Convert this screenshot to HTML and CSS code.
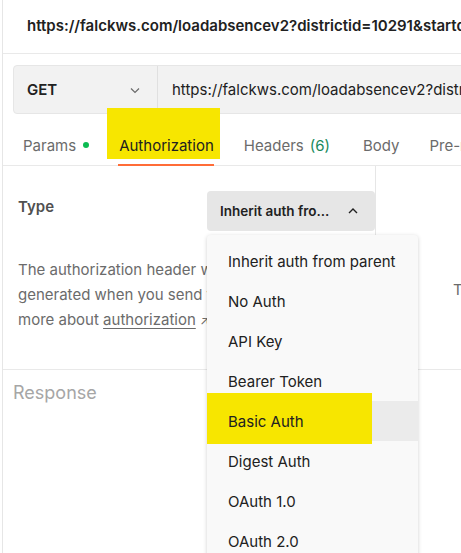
FILE: index.html
```html
<!DOCTYPE html>
<html>
<head>
<meta charset="utf-8">
<link rel="stylesheet" href="styles.css">
</head>
<body>
<div class="app">
  <div class="topbar">
    <span class="req-title">https://falckws.com/loadabsencev2?districtid=10291&amp;startdate=2021-01-01</span>
  </div>
  <div class="urlrow">
    <div class="urlbox">
      <div class="method">
        <span class="method-name">GET</span>
        <svg class="chev" width="12" height="12" viewBox="0 0 12 12"><path d="M2 4.5 L6 8.5 L10 4.5" fill="none" stroke="#6b6b6b" stroke-width="1.2"/></svg>
      </div>
      <div class="url">https://falckws.com/loadabsencev2?districtid=10291&amp;startdate=2021</div>
    </div>
  </div>
  <div class="tabs">
    <div class="tab">Params<span class="dot"></span></div>
    <div class="tab active"><span class="hl hl-tab"></span><span class="label">Authorization</span></div>
    <div class="tab">Headers <span class="count">(6)</span></div>
    <div class="tab">Body</div>
    <div class="tab">Pre-request Script</div>
  </div>
  <div class="content">
    <div class="left">
      <div class="type-row">
        <span class="type-label">Type</span>
        <div class="select-wrap">
          <div class="select">
            <span>Inherit auth fro...</span>
            <svg class="chev-up" width="12" height="12" viewBox="0 0 12 12"><path d="M2 8 L6 4 L10 8" fill="none" stroke="#212121" stroke-width="1.4"/></svg>
          </div>
          <div class="menu">
            <div class="item">Inherit auth from parent</div>
            <div class="item">No Auth</div>
            <div class="item">API Key</div>
            <div class="item">Bearer Token</div>
            <div class="item hover"><span class="hl hl-item"></span><span class="label">Basic Auth</span></div>
            <div class="item">Digest Auth</div>
            <div class="item">OAuth 1.0</div>
            <div class="item">OAuth 2.0</div>
            <div class="item">Hawk Authentication</div>
          </div>
        </div>
      </div>
      <p class="desc">The authorization header will be automatically generated when you send the request. Learn more about <span class="link">authorization</span> <span class="arrow">↗</span></p>
    </div>
    <div class="right">
      <p class="right-text">This request is using No Auth</p>
    </div>
  </div>
  <div class="response">Response</div>
</div>
</body>
</html>
```
FILE: styles.css
```css
* { box-sizing: border-box; }
html, body {
  margin: 0;
  padding: 0;
  width: 461px;
  height: 553px;
  overflow: hidden;
  background: #ffffff;
  font-family: Inter, "Noto Sans", sans-serif;
  color: #212121;
}
.app {
  margin-left: 2px;
  border-left: 1px solid #e6e6e6;
  height: 553px;
  width: 600px;
  overflow: hidden;
}
.topbar {
  height: 54px;
  border-bottom: 1px solid #e9e9e9;
  padding: 15px 0 0 24px;
  white-space: nowrap;
}
.req-title {
  font-size: 15px;
  font-weight: 600;
  color: #212121;
}
.urlrow {
  padding: 11px 0 0 10px;
}
.urlbox {
  display: flex;
  height: 49px;
  background: #f2f2f2;
  border: 1px solid #e6e6e6;
  border-radius: 4px;
  width: 700px;
}
.method {
  width: 144px;
  display: flex;
  align-items: center;
  justify-content: space-between;
  padding: 0 16px 0 13px;
  border-right: 1px solid #e0e0e0;
}
.method-name {
  font-size: 15px;
  font-weight: 600;
}
.url {
  display: flex;
  align-items: center;
  padding-left: 14px;
  font-size: 15px;
  white-space: nowrap;
  color: #212121;
}
.tabs {
  display: flex;
  height: 52px;
  align-items: center;
  padding: 0 0 0 20px;
  gap: 30px;
  border-bottom: 1px solid #e9e9e9;
  white-space: nowrap;
}
.tab {
  position: relative;
  font-size: 15px;
  color: #6b6b6b;
  height: 52px;
  display: flex;
  align-items: center;
  padding-top: 11px;
}
.tab.active {
  color: #212121;
}
.tab.active::after {
  content: "";
  position: absolute;
  left: -1px;
  right: 0;
  bottom: 0;
  height: 2px;
  background: #ff6c37;
}
.dot {
  display: inline-block;
  width: 6px;
  height: 6px;
  border-radius: 50%;
  background: #0cbb52;
  margin-left: 7px;
}
.count {
  color: #1a8a5c;
  margin-left: 6px;
  padding-right: 3px;
}
.label {
  position: relative;
  z-index: 1;
}
.hl {
  position: absolute;
  z-index: 0;
  background: #f7e600;
}
.hl-tab {
  left: -12px;
  right: -6px;
  top: -6px;
  bottom: 7px;
}
.content {
  display: flex;
  height: 204px;
  border-bottom: 1px solid #e9e9e9;
}
.left {
  width: 387px;
  border-right: 1px solid #e6e6e6;
  padding: 25px 0 0 15px;
}
.type-row {
  display: flex;
  align-items: flex-start;
}
.type-label {
  font-size: 15px;
  font-weight: 600;
  color: #505050;
  width: 189px;
  padding-top: 6px;
}
.select-wrap {
  position: relative;
  z-index: 5;
}
.select {
  width: 168px;
  height: 40px;
  background: #e6e6e6;
  border-radius: 4px;
  display: flex;
  align-items: center;
  justify-content: space-between;
  padding: 0 16px 0 13px;
  font-size: 13.5px;
  font-weight: 600;
  color: #212121;
}
.menu {
  position: absolute;
  top: 44px;
  left: 0;
  width: 211px;
  background: #f9f9f9;
  border-radius: 4px;
  box-shadow: 0 1px 4px rgba(0,0,0,0.18);
  padding-top: 6px;
}
.item {
  position: relative;
  height: 40px;
  display: flex;
  align-items: center;
  padding-left: 21px;
  font-size: 15px;
  color: #212121;
  white-space: nowrap;
}
.item.hover {
  background: #ebebeb;
}
.hl-item {
  left: 0;
  width: 165px;
  top: -8px;
  bottom: -3px;
}
.desc {
  margin: 26px 0 0 0;
  font-size: 15px;
  line-height: 25px;
  color: #6b6b6b;
  width: 352px;
}
.link {
  text-decoration: underline;
  text-underline-offset: 3px;
}
.arrow {
  font-size: 12px;
}
.right {
  flex: 1;
  padding: 114px 0 0 77px;
}
.right-text {
  margin: 0;
  font-size: 15px;
  color: #6b6b6b;
  white-space: nowrap;
}
.response {
  padding: 12px 0 0 10px;
  font-size: 18px;
  color: #a6a6a6;
}
```
